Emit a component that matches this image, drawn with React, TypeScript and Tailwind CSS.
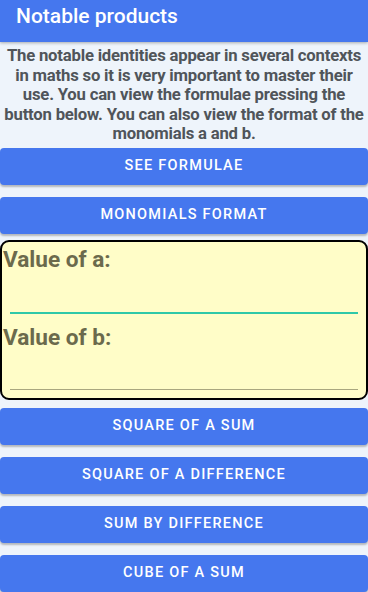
import React from 'react'

const font = { fontFamily: 'Roboto, "Liberation Sans", sans-serif' }

const ActionButton = ({ label }: { label: string }) => (
    <button className="h-[37px] w-full rounded-[4px] bg-[#4577ee] text-[14.5px] font-medium uppercase tracking-[1.25px] text-white shadow-[0_2px_2px_rgba(0,0,0,0.25)]">
        {label}
    </button>
)

const App: React.FC = () => {
    return (
        <div className="h-[592px] w-[368px] overflow-hidden bg-[#eef4fb]" style={font}>
            <div className="flex h-[42px] items-start bg-[#4577ee] pl-4 pt-[1px] shadow-[0_1px_3px_rgba(0,0,0,0.3)]">
                <h1 className="text-[21px] font-medium text-white">Notable products</h1>
            </div>
            <p className="pt-[4px] text-center text-[16.7px] font-bold leading-[19.5px] tracking-[-0.2px] text-[#50555a]">
                The notable identities appear in several contexts in maths so it is very important to master their use. You can view the formulae pressing the button below. You can also view the format of the monomials a and b.
            </p>
            <div className="mt-[4px] flex flex-col gap-[12px]">
                <ActionButton label="See formulae" />
                <ActionButton label="Monomials format" />
            </div>
            <div className="mt-[6px] h-[160px] rounded-[9px] border-2 border-black bg-[#fffdc8] px-[1px]">
                <div className="pt-[4px] text-[22.6px] font-bold leading-[28px] text-[#6b6a4c]">Value of a:</div>
                <div className="mx-[7px] mt-[38px] h-[2px] bg-[#2fc8a8]" />
                <div className="pt-[10px] text-[22.6px] font-bold leading-[28px] text-[#6b6a4c]">Value of b:</div>
                <div className="mx-[7px] mt-[37px] h-[1px] bg-[#a9a77f]" />
            </div>
            <div className="mt-[8px] flex flex-col gap-[12px]">
                <ActionButton label="Square of a sum" />
                <ActionButton label="Square of a difference" />
                <ActionButton label="Sum by difference" />
                <ActionButton label="Cube of a sum" />
            </div>
        </div>
    )
}

export default App
